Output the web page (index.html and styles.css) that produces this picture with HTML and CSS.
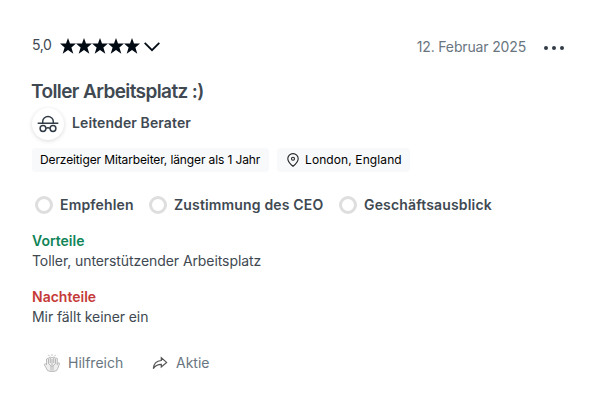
FILE: index.html
```html
<!DOCTYPE html>
<html lang="de">
<head>
  <meta charset="UTF-8">
  <title>Bewertung</title>
  <link rel="stylesheet" href="styles.css">
</head>
<body>

  <div class="review">
    <div class="header">
      <div class="rating">
        <span class="score">5,0</span>
        <svg class="stars" width="80" height="16" viewBox="0 0 80 16">
          <defs>
            <path id="star" d="M8 0l2 5.500h6L11.400 9.400l1.900 6.300L8 12l-5.300 3.700 1.900-6.300L0 5.500h6z"/>
          </defs>
          <use href="#star"/>
          <use href="#star" x="16"/>
          <use href="#star" x="32"/>
          <use href="#star" x="48"/>
          <use href="#star" x="64"/>
        </svg>
        <svg class="chevron" width="16" height="10" viewBox="0 0 16 10"><path d="M.7.9L8 8.200 15.300.9"/></svg>
      </div>
      <span class="date">12. Februar 2025</span>
      <svg class="more" width="20" height="6" viewBox="0 0 20 6">
        <circle cx="2" cy="3" r="2"/><circle cx="10" cy="3" r="2"/><circle cx="18" cy="3" r="2"/>
      </svg>
    </div>

    <h2>Toller Arbeitsplatz :)</h2>

    <div class="author">
      <span class="avatar">
        <svg width="22" height="18" viewBox="0 0 22 18">
          <path d="M.7 8.200h20.600M5.700 8V6.600a5.300 5 0 0 1 10.600 0V8M9 13.300q2-1.200 4 0"/>
          <circle cx="6" cy="13.500" r="2.900"/><circle cx="16" cy="13.500" r="2.900"/>
        </svg>
      </span>
      <span class="job">Leitender Berater</span>
    </div>

    <div class="tags">
      <span class="tag tag-status">Derzeitiger Mitarbeiter, länger als 1 Jahr</span>
      <span class="tag tag-place">
        <svg width="12" height="14" viewBox="0 0 12 14">
          <path d="M6 13.300C3.500 11.300.8 8.900.8 5.800a5.200 5.200 0 0 1 10.400 0c0 3.100-2.700 5.500-5.200 7.500z"/>
          <circle cx="6" cy="5.800" r="1.500"/>
        </svg>
        <span>London, England</span>
      </span>
    </div>

    <div class="opinions">
      <span class="opinion recommend"><i class="ring"></i><b>Empfehlen</b></span>
      <span class="opinion ceo"><i class="ring"></i><b>Zustimmung des CEO</b></span>
      <span class="opinion outlook"><i class="ring"></i><b>Geschäftsausblick</b></span>
    </div>

    <div class="section">
      <h3 class="pro">Vorteile</h3>
      <p>Toller, unterstützender Arbeitsplatz</p>
    </div>

    <div class="section">
      <h3 class="con">Nachteile</h3>
      <p>Mir fällt keiner ein</p>
    </div>

    <div class="actions">
      <span class="action helpful">
        <svg width="18" height="18" viewBox="0 0 18 18">
          <path class="palm" d="M4.500 16.500L3.200 14 1.200 10.500l1.300-.8 1 1V5l1.300-.7L6 4l1.300-1 1.200.5h1L11 3l1.200 1 1 0 1.200.6-.2 6 1.400-2 1 .8-1.600 4.700-1.400 2.500-2.500.8H7z"/>
          <path d="M5.500 5v4.500L8 12v4.500M12.500 5v4.500L10 12v4.500M7.300 4v5M10.700 4v5M9 5v8M9 0v1.800M5.500.8l.8 1.400M12.500.8l-.8 1.400"/>
        </svg>
        <span>Hilfreich</span>
      </span>
      <span class="action share">
        <svg width="16" height="14" viewBox="0 0 16 14">
          <path d="M9.300 1.800L14.600 6.400 9.300 11V8.300C5.500 8.300 3.200 9.500 1.300 12.600 1.600 8 4.300 4.900 9.300 4.500z"/>
        </svg>
        <span>Aktie</span>
      </span>
    </div>
  </div>

</body>
</html>
```
FILE: styles.css
```css
* {
  box-sizing: border-box;
}

body {
  margin: 0;
  background: #fff;
  color: #404952;
  font-family: "Inter", "Liberation Sans", sans-serif;
  font-size: 14px;
  line-height: 20px;
}

svg {
  fill: none;
  flex: none;
}

h2, h3, p {
  margin: 0;
}

.review {
  padding: 35px 40px 0 32px;
}

.header {
  display: flex;
  align-items: center;
  height: 24px;
}

.rating {
  display: flex;
  align-items: center;
}

.score {
  width: 28px;
  padding-bottom: 4px;
  letter-spacing: -0.4px;
}

.stars {
  fill: #020b14;
  margin-bottom: 3px;
}

.chevron {
  margin-left: 4px;
  stroke: #020b14;
  stroke-width: 1.8;
}

.date {
  margin-left: auto;
  color: #69767f;
  letter-spacing: -0.15px;
}

.more {
  margin-left: 18px;
  margin-right: 2px;
  margin-top: 2px;
  fill: #323c46;
}

h2 {
  margin-top: 20px;
  margin-left: -1px;
  font-size: 19px;
  font-weight: 600;
  line-height: 26px;
  letter-spacing: -0.6px;
}

.author {
  display: flex;
  margin-top: 3px;
}

.avatar {
  display: flex;
  align-items: center;
  justify-content: center;
  width: 32px;
  height: 32px;
  border-radius: 50%;
  box-shadow: 0 1px 4px rgba(0, 0, 0, 0.15);
}

.avatar svg {
  stroke: #323c46;
  stroke-width: 1.5;
}

.job {
  margin: 5px 0 0 8px;
  font-weight: 600;
  letter-spacing: 0.1px;
}

.tags {
  display: flex;
  gap: 8px;
  margin-top: 8px;
}

.tag {
  display: flex;
  align-items: center;
  height: 24px;
  padding: 0 8px;
  border-radius: 4px;
  background: #f8f9fb;
  color: #000;
  font-size: 12px;
}

.tag-status {
  width: 237px;
  letter-spacing: -0.12px;
  white-space: nowrap;
}

.tag-place {
  width: 133px;
  gap: 6px;
  padding-left: 10px;
  letter-spacing: 0.1px;
}

.tag svg {
  stroke: #222;
  stroke-width: 1.1;
}

.opinions {
  display: flex;
  margin: 20px 0 0 3px;
  height: 26px;
}

.opinion {
  display: flex;
  align-items: center;
  gap: 7px;
  height: 26px;
  white-space: nowrap;
}

.opinion b {
  font-weight: 600;
  letter-spacing: 0.16px;
}

.recommend {
  width: 114px;
}

.ceo {
  width: 190px;
}

.ring {
  width: 18px;
  height: 18px;
  border: 3px solid #dedede;
  border-radius: 50%;
}

.section {
  margin-bottom: 16px;
}

.section p {
  letter-spacing: -0.08px;
}

.opinions + .section {
  margin-top: 13px;
}

h3 {
  font-size: 14px;
  font-weight: 600;
  line-height: 20px;
}

.pro {
  color: #118557;
}

.con {
  color: #c53a38;
}

.actions {
  display: flex;
  margin: 26px 0 0 11px;
  color: #69767f;
}

.action {
  display: flex;
  align-items: center;
  gap: 7px;
}

.helpful {
  width: 109px;
}

.helpful svg {
  stroke: #a0a0a0;
  stroke-width: 0.7;
}

.palm {
  fill: #eee;
}

.share {
  gap: 8px;
}

.share svg {
  stroke: #555;
  stroke-width: 1.2;
}
```
